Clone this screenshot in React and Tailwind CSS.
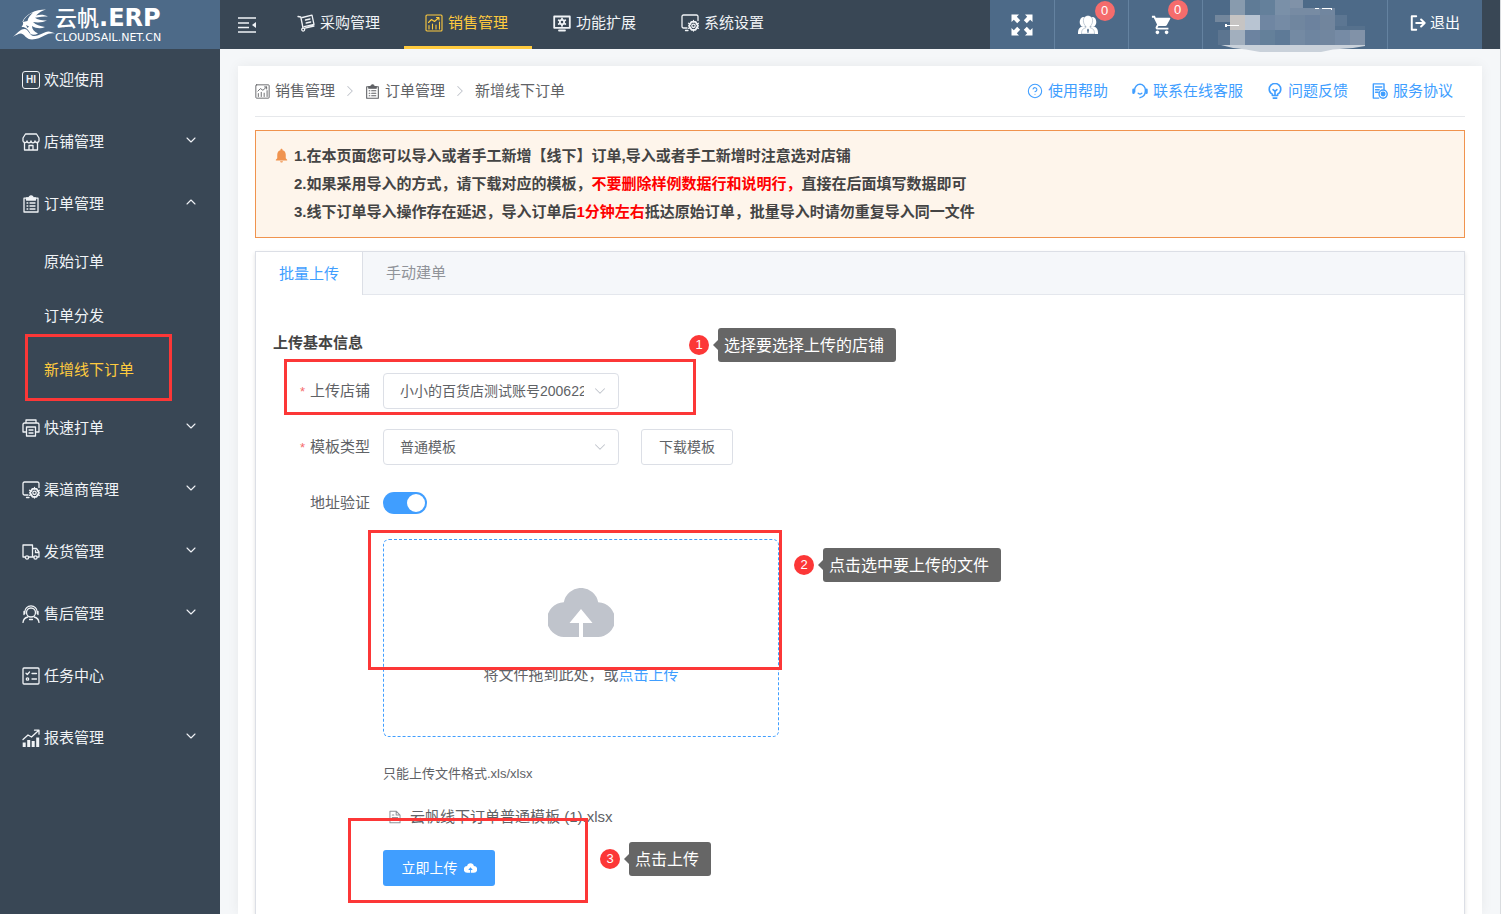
import React, { useState } from 'react';
import { ChevronDown, ChevronUp, ChevronRight, HelpCircle } from 'lucide-react';
import { MdNotifications, MdShoppingCart } from 'react-icons/md';

const Svg = ({ children, size = 'size-[18px]', sw = 1.3 }) => (
  <svg
    viewBox="0 0 18 18"
    className={`${size} shrink-0`}
    fill="none"
    stroke="currentColor"
    strokeWidth={sw}
    strokeLinecap="round"
    strokeLinejoin="round"
    aria-hidden="true"
  >
    {children}
  </svg>
);

const HiIcon = () => (
  <span className="flex size-[18px] shrink-0 items-center justify-center rounded-[3px] border border-current text-[10px] leading-none font-bold">
    HI
  </span>
);

const StoreIcon = () => (
  <Svg>
    <path d="M3.5 1h11L17 5v2.2a2 2 0 0 1-4 .6 2 2 0 0 1-4 0 2 2 0 0 1-4 0A2 2 0 0 1 1 7.2V5z" />
    <path d="M2.5 9.5V17h13V9.5M7 17v-4.5h4V17" />
  </Svg>
);

const ClipboardIcon = ({ size }) => (
  <Svg size={size}>
    <path d="M2 3.2h14V17H2z" />
    <path d="M4.5 5V3H7a2 2 0 0 1 4 0h2.5v2z" fill="currentColor" />
    <path d="M5 8h.8M5 11h.8M5 14h.8M8 8h5M8 11h5M8 14h5" />
  </Svg>
);

const PrinterIcon = () => (
  <Svg>
    <path d="M4 4V1h10v3M4.5 13H1V5.5A1.5 1.5 0 0 1 2.5 4h13A1.5 1.5 0 0 1 17 5.5V13h-3.5" />
    <path d="M4.5 8h9v9h-9zM7 11h4M7 14h4" />
  </Svg>
);

const MonitorGearIcon = () => (
  <Svg>
    <path d="M17 6.5V2.5A1.5 1.5 0 0 0 15.5 1h-13A1.5 1.5 0 0 0 1 2.5v10A1.5 1.5 0 0 0 2.5 14H6M4.5 16.5H7" />
    <path d="M10.5 7.8h4l2.5 4-2.5 4h-4l-2.5-4z" strokeWidth="1.8" />
    <circle cx="12.5" cy="11.8" r="1.7" />
    <path d="M12.5 6.5v1.3M12.5 15.8V17M7.5 9.3l1.5.8M16 13.6l1.4.7M17.4 9.3l-1.4.8M9 13.6l-1.5.7" />
  </Svg>
);

const TruckIcon = () => (
  <Svg>
    <path d="M3.5 14H1V2h9.5v12H6.5M10.5 5.5h4L17 9v5h-1.5M12 14h-1.5M17 9.5h-3.5V7.5" />
    <circle cx="5" cy="14.5" r="1.6" />
    <circle cx="13.5" cy="14.5" r="1.6" />
  </Svg>
);

const ServiceIcon = () => (
  <Svg>
    <circle cx="9" cy="7.5" r="4.5" />
    <path d="M2.8 8.5V7a6.2 6.2 0 0 1 12.4 0v1.5M2 6.5v3M16 6.5v3" />
    <path d="M1 17.5c.3-3 2-4.8 4.8-5.5M17 17.5c-.3-3-2-4.8-4.8-5.5M7.5 14.5h3" />
  </Svg>
);

const TaskIcon = () => (
  <Svg>
    <rect x="1" y="1" width="16" height="16" rx="1" />
    <path d="M4 6.2l1.3 1.3L7.5 5M10 6.5h4.5M10 12h4.5" />
    <circle cx="5.5" cy="12" r="1.2" />
  </Svg>
);

const ReportIcon = () => (
  <Svg>
    <path d="M2.2 18v-4.5M6.7 18v-7M11.2 18v-6M15.7 18V8.5" strokeWidth="3" strokeLinecap="butt" />
    <path d="M1 10.5L6 6l3.5 2L16 2M12.5 1.2H17v4" />
  </Svg>
);

const TrolleyIcon = () => (
  <Svg>
    <path d="M1 2.5l2.8.5L6 14M8 14.2l9-2.2M5.3 3.5L15 1.2l2 9.3-9.8 2.2" />
    <path d="M8.5 6l4.5-1M9.2 9l4.5-1" />
    <circle cx="6.2" cy="15.6" r="1.5" />
  </Svg>
);

const ChartIcon = ({ size }) => (
  <Svg size={size} sw={1.1}>
    <rect x="1" y="1" width="16" height="16" rx="1" />
    <path d="M4 15v-3.5M7.5 15v-5M11 15v-4M14.5 15V8" />
    <path d="M3.5 8.5l3-3 3 2L14 3.5M11.5 3.5H14V6" />
  </Svg>
);

const ExtendIcon = () => (
  <Svg sw={1.8}>
    <path d="M1.2 2.5h15.6v11.3H1.2zM6 16.5h6" />
    <circle cx="9" cy="8.1" r="2.2" />
    <path d="M9 4.3v1.2M9 10.7v1.2M5.7 6.2l1 .6M11.3 9.5l1 .6M12.3 6.2l-1 .6M6.7 9.5l-1 .6" />
  </Svg>
);

const CollapseIcon = () => (
  <Svg sw={1.4}>
    <path d="M0 2h18M0 7h11M0 11.5h11M0 16h18" strokeLinecap="butt" />
    <path d="M18 6v6l-4-3z" fill="currentColor" stroke="none" />
  </Svg>
);

const ExpandIcon = () => (
  <svg viewBox="0 0 22 22" className="size-[22px]" fill="currentColor" aria-hidden="true">
    {[0, 90, 180, 270].map((deg) => (
      <path key={deg} d="M.5.5H8L5.8 2.8 9.2 6.2l-3 3-3.4-3.4L.5 8z" transform={`rotate(${deg} 11 11)`} />
    ))}
  </svg>
);

const MembersIcon = () => (
  <svg viewBox="0 0 20 20" className="size-5" fill="currentColor" aria-hidden="true">
    <ellipse cx="5.5" cy="7" rx="3.8" ry="5" />
    <ellipse cx="14.5" cy="7" rx="3.8" ry="5" />
    <path d="M0 19c0-4 .5-6 4-7.5h12c3.5 1.5 4 3.5 4 7.5z" />
    <path
      d="M10 .5c-3 0-4.6 2.2-4.6 5 0 2.5.9 4.5 2.4 5.7v1.6c-2.8.7-4.3 2-4.3 6.2h13c0-4.2-1.5-5.5-4.3-6.2v-1.6c1.5-1.2 2.4-3.2 2.4-5.7 0-2.8-1.6-5-4.6-5z"
      stroke="#4d6a88"
      strokeWidth=".35"
    />
    <path d="M10 13.5l1 1.2-.6 3.3h-.8L9 14.7z" fill="#4d6a88" />
  </svg>
);

const ExitIcon = () => (
  <Svg size="size-4" sw={2.2}>
    <path d="M7 1.5H2v15h5" />
    <path d="M7 9h9M12.5 5l4 4-4 4" />
  </Svg>
);

const HeadsetIcon = () => (
  <Svg size="size-4" sw={1.6}>
    <path d="M3 10V7.5a6 6 0 0 1 12 0V9c0 4-2 6.5-6 7.5" />
    <path d="M1.7 7.5V11M16.3 7.5V11" strokeWidth="2.8" />
    <path d="M7 11.5c1.3 1 2.7 1 4 0" />
  </Svg>
);

const BulbIcon = () => (
  <Svg size="size-4" sw={1.8}>
    <path d="M6 12.5C3.5 11 2.5 9 2.5 7a6.5 6.5 0 0 1 13 0c0 2-1 4-3.5 5.5V14H6zM7 17h4M9 14V9M6.8 7.5L9 9.5l2.2-2" />
  </Svg>
);

const AgreementIcon = () => (
  <Svg size="size-4" sw={1.6}>
    <path d="M7.5 17h-6V1h12v6M4 4.5h7M4 7.5h4M4 10.5h3" />
    <circle cx="12.5" cy="12.5" r="4.6" />
    <circle cx="12.5" cy="12.5" r="2" fill="currentColor" />
  </Svg>
);

const FileIcon = () => (
  <Svg size="size-[14px]">
    <path d="M2.5 1.5h8l5 5v10h-13zM10.5 1.5v5h5M5.5 6.5h2M5.5 9.8h7M5.5 13h7" />
  </Svg>
);

const CloudIcon = ({ className }) => (
  <svg viewBox="0 0 66 49" className={className} fill="currentColor" aria-hidden="true">
    <path d="M17 49A17 17 0 0 1 15.8 14.2A17.5 17.5 0 0 1 50.2 14.2A17 17 0 0 1 49 49H35V35h9.5L33 21 21.5 35H31v14z" />
  </svg>
);

// winged sail mark next to the brand name
const SailMark = () => (
  <svg viewBox="0 0 42 31" className="h-[31px] w-[42px]" fill="#fff" aria-hidden="true">
    <path d="M0 27.5c4-2.5 7-7.5 11.5-7.5 4 0 5 7 9.5 7 6 0 10-4.5 14.5-4.5 2 0 4.5 1 6.5 2-4-.7-7 .2-10 1.8-4 2.2-8 4.2-13 4.2-6 0-7-5-11-6-3 0-5 2-8 3z" />
    <path d="M33 .5C22 .5 13 5 9.5 12.5c1.5 2 0 4-1 5.5 3-.5 7 1.5 9 7 2 1 5 1 7.5-.5-4-1.5-6-4.500-6-7.500 4 2.500 9 3 13 1-5-1-9-2-12-5 5 1 10 .5 14-1.500-5 .3-9-.7-12-2.700 4-1 9-1.300 13-1.300-4-2-8-2-12-1 3-3 6-5 10-6z" />
    <path d="M10 13c1.5-4 5-7.5 10-9.5-3 3-5 5.5-5.5 8.5z" fill="#4d6a88" />
    <path d="M13 16l3 1.5-1.5 1.5z" fill="#4d6a88" />
  </svg>
);

// pixel mosaic that hides the account name
const MOSAIC = [
  [15, 0, 15, 15, '#889bae'], [30, 0, 15, 15, '#5f7b96'], [45, 0, 15, 15, '#64809b'], [60, 0, 15, 15, '#7a90a8'], [75, 0, 13, 8, '#8092a8'],
  [75, 8, 30, 7, '#778ba3'], [105, 8, 15, 7, '#71869f'],
  [0, 15, 15, 7, '#73879d'], [15, 15, 15, 15, '#c6c4c3'], [30, 15, 15, 15, '#b8c4d2'], [45, 15, 15, 15, '#6f86a2'], [60, 15, 15, 15, '#758ba5'],
  [75, 15, 15, 15, '#70869f'], [90, 15, 15, 15, '#6c829e'], [105, 15, 15, 15, '#71859d'], [120, 15, 12, 12, '#5c7692'],
  [3, 30, 12, 15, '#5c7590'], [15, 30, 15, 15, '#a2afbe'], [30, 30, 15, 15, '#6c83a0'], [45, 30, 15, 15, '#64809a'], [60, 30, 15, 15, '#5e7a97'],
  [75, 30, 15, 15, '#748aa3'], [90, 30, 15, 15, '#6e85a0'], [105, 30, 15, 15, '#71869f'], [120, 30, 15, 15, '#768ba5'], [135, 30, 15, 15, '#8192a8'],
  [120, 26, 30, 4, '#56718d'],
];

const AccountMosaic = () => (
  <svg viewBox="0 0 150 52" className="relative ml-3 h-[52px] w-[150px] shrink-0 self-start" aria-hidden="true">
    {MOSAIC.map(([x, y, w, h, fill], i) => (
      <rect key={i} x={x} y={y} width={w} height={h} fill={fill} />
    ))}
    <path d="M6 45h144v1l-12 2-20 1.5-12 2.5H45l-14-2.5L18 48z" fill="#c9d1da" />
    <path d="M10 24h2v1h12v1H12v1h-2zM100 8h4v1h-4zM107 8h10v2h-1V9h-9z" fill="#fff" />
  </svg>
);

const SIDE_MENU = [
  { label: '欢迎使用', icon: HiIcon },
  { label: '店铺管理', icon: StoreIcon, arrow: true },
  { label: '订单管理', icon: ClipboardIcon, arrow: true, children: ['原始订单', '订单分发', '新增线下订单'] },
  { label: '快速打单', icon: PrinterIcon, arrow: true },
  { label: '渠道商管理', icon: MonitorGearIcon, arrow: true },
  { label: '发货管理', icon: TruckIcon, arrow: true },
  { label: '售后管理', icon: ServiceIcon, arrow: true },
  { label: '任务中心', icon: TaskIcon },
  { label: '报表管理', icon: ReportIcon, arrow: true },
];

const TOP_MENU = [
  { label: '采购管理', icon: TrolleyIcon },
  { label: '销售管理', icon: ChartIcon, active: true },
  { label: '功能扩展', icon: ExtendIcon },
  { label: '系统设置', icon: MonitorGearIcon },
];

const HELP_LINKS = [
  { label: '使用帮助', icon: () => <HelpCircle className="size-4" strokeWidth={1.6} /> },
  { label: '联系在线客服', icon: HeadsetIcon },
  { label: '问题反馈', icon: BulbIcon },
  { label: '服务协议', icon: AgreementIcon },
];

const Highlight = ({ className }) => (
  <div className={`pointer-events-none absolute z-10 border-3 border-[#fc3737] ${className}`} />
);

const Callout = ({ step, text, className }) => (
  <div className={`absolute z-10 flex items-center whitespace-nowrap ${className}`}>
    <span className="mr-1 flex size-5 items-center justify-center rounded-full bg-[#fc3737] text-[13px] text-white">{step}</span>
    <span className="border-y-5 border-r-5 border-y-transparent border-r-[#666]" />
    <span className="h-[34px] rounded-[3px] bg-[#666] pr-3 pl-[6px] text-base leading-[35px] text-white">{text}</span>
  </div>
);

const Sidebar = () => (
  <aside className="w-[220px] shrink-0 bg-[#394755] text-[#f0f3f6]">
    <a href="#home" className="flex h-[49px] items-center bg-[#4d6a88] pl-[13px] text-white">
      <SailMark />
      <span className="flex flex-col">
        <span className="flex h-6 items-baseline leading-6">
          <span className="text-[22px] font-medium">云帆</span>
          <span className="font-['DejaVu_Sans'] text-2xl leading-6 font-bold">.ERP</span>
        </span>
        <span className="mt-[2px] font-['DejaVu_Sans'] text-[11px] leading-[11px]">CLOUDSAIL.NET.CN</span>
      </span>
    </a>
    <nav>
      <ul>
        {SIDE_MENU.map((item) => (
          <li key={item.label}>
            <a href="#menu" className="flex h-[62px] items-center pr-[21px] pl-[22px]">
              <item.icon />
              <span className="ml-1 flex-1">{item.label}</span>
              {item.arrow &&
                (item.children ? (
                  <ChevronUp className="mb-1 size-4" strokeWidth={1.6} />
                ) : (
                  <ChevronDown className="mb-1 size-4" strokeWidth={1.6} />
                ))}
            </a>
            {item.children && (
              <ul>
                {item.children.map((name, i) => (
                  <li key={name} className="relative">
                    <a
                      href="#sub"
                      className={`flex h-[54px] items-center pl-11 ${i === 2 ? 'text-[#ffcb3e]' : ''}`}
                    >
                      {name}
                    </a>
                    {i === 2 && <Highlight className="-top-[9px] left-[25px] h-[67px] w-[147px]" />}
                  </li>
                ))}
              </ul>
            )}
          </li>
        ))}
      </ul>
    </nav>
  </aside>
);

const IconCell = ({ children, count, label }) => (
  <button aria-label={label} className="flex w-[74px] items-center justify-center border-l border-[#6482a0] pr-2">
    <span className="relative">
      {children}
      <span className="absolute -top-[14px] left-[17px] flex size-5 items-center justify-center rounded-full bg-[#f56c6c] text-[13px]">
        {count}
      </span>
    </span>
  </button>
);

const Header = () => (
  <header className="flex h-[49px] bg-[#394755] text-[#f0f3f6]">
    <button aria-label="收起菜单" className="px-[18px]">
      <CollapseIcon />
    </button>
    <nav className="ml-[2px] flex">
      {TOP_MENU.map((item) => (
        <a
          key={item.label}
          href="#top"
          className={`flex w-32 items-center gap-[5px] border-b-3 pl-[21px] ${
            item.active ? 'border-[#ffcb3e] text-[#ffcb3e]' : 'border-transparent'
          }`}
        >
          <item.icon />
          {item.label}
        </a>
      ))}
    </nav>
    <div className="mr-[18px] ml-auto flex bg-[#4d6a88] text-white">
      <button aria-label="全屏" className="flex w-16 items-center justify-center">
        <ExpandIcon />
      </button>
      <IconCell count={0} label="会员">
        <MembersIcon />
      </IconCell>
      <IconCell count={0} label="购物车">
        <MdShoppingCart className="size-[22px]" />
      </IconCell>
      <div className="flex w-[185px] border-l border-[#6482a0]">
        <AccountMosaic />
      </div>
      <button className="flex w-[95px] items-center justify-center gap-1 border-l border-[#6482a0] pb-1">
        <ExitIcon />
        退出
      </button>
    </div>
  </header>
);

const Required = () => <span className="mr-[5px] text-[13px] text-[#f56c6c]">*</span>;

const SelectBox = ({ id, children }) => (
  <div className="relative w-[236px]">
    <select
      id={id}
      className="h-9 w-full appearance-none rounded-sm border border-[#dcdfe6] bg-white pr-[34px] pl-4 text-sm text-[#606266]"
    >
      {children}
    </select>
    <ChevronDown
      className="pointer-events-none absolute top-[9px] right-[10px] size-[18px] text-[#c0c4cc]"
      strokeWidth={1.4}
    />
  </div>
);

const App = () => {
  const [tab, setTab] = useState('批量上传');
  const [verify, setVerify] = useState(true);

  return (
    <div className="flex min-h-screen border-r border-[#d9dcdf] bg-[#f5f7f9] font-['Liberation_Sans','Noto_Sans_CJK_SC',sans-serif] text-[15px] leading-6 text-[#606266]">
      <Sidebar />
      <div className="flex min-w-0 flex-1 flex-col">
        <Header />
        <main className="mx-[18px] mt-[17px] flex flex-1 flex-col bg-white px-[17px] shadow-[0_0_12px_rgba(0,0,0,0.06)]">
          <div className="flex h-[51px] items-center justify-between border-b border-[#e6e8eb] pr-3">
            <nav className="flex items-center">
              <ChartIcon size="size-[15px]" />
              <a href="#sales" className="ml-[5px]">销售管理</a>
              <ChevronRight className="mx-[6px] size-[18px] text-[#c0c4cc]" strokeWidth={1.4} />
              <ClipboardIcon size="size-[15px]" />
              <a href="#orders" className="ml-[5px]">订单管理</a>
              <ChevronRight className="mx-[6px] size-[18px] text-[#c0c4cc]" strokeWidth={1.4} />
              <span>新增线下订单</span>
            </nav>
            <div className="flex gap-6 text-[#409eff]">
              {HELP_LINKS.map((link) => (
                <a key={link.label} href="#help" className="flex items-center gap-[5px]">
                  <link.icon />
                  {link.label}
                </a>
              ))}
            </div>
          </div>

          <div className="mt-[13px] flex border border-[#f0934e] bg-[#fef5eb] pt-[11px] pb-[11px] pl-[17px] leading-7 font-bold text-[#444]">
            <MdNotifications className="mt-[5px] mr-1 size-[17px] text-[#f0934e]" />
            <div>
              <p>1.在本页面您可以导入或者手工新增【线下】订单,导入或者手工新增时注意选对店铺</p>
              <p>
                2.如果采用导入的方式，请下载对应的模板，
                <span className="text-[#f00]">不要删除样例数据行和说明行，</span>
                直接在后面填写数据即可
              </p>
              <p>
                3.线下订单导入操作存在延迟，导入订单后<span className="text-[#f00]">1分钟左右</span>
                抵达原始订单，批量导入时请勿重复导入同一文件
              </p>
            </div>
          </div>

          <section className="mt-[13px] flex-1 border border-b-0 border-[#dcdfe6] shadow-[0_2px_4px_rgba(0,0,0,0.12)]">
            <div className="flex h-[43px] bg-[#f5f7fa]" role="tablist">
              {['批量上传', '手动建单'].map((name) => (
                <button
                  key={name}
                  role="tab"
                  aria-selected={tab === name}
                  onClick={() => setTab(name)}
                  className={`px-[23px] ${
                    tab === name
                      ? 'border-r border-[#dcdfe6] bg-white text-[#409eff]'
                      : 'border-b border-b-[#e4e7ed] text-[#909399]'
                  }`}
                >
                  {name}
                </button>
              ))}
              <span className="flex-1 border-b border-[#e4e7ed]" />
            </div>

            <form className="px-[17px] pt-9 pb-6" onSubmit={(e) => e.preventDefault()}>
              <h2 className="mb-[18px] font-bold text-[#444]">上传基本信息</h2>

              <div className="grid gap-5">
                <div className="relative flex items-center">
                  <label htmlFor="shop" className="w-[110px] pr-[13px] text-right">
                    <Required />
                    上传店铺
                  </label>
                  <SelectBox id="shop">
                    <option>小小的百货店测试账号200622</option>
                  </SelectBox>
                  <Highlight className="-top-[14px] left-[11px] h-14 w-[412px]" />
                  <Callout step={1} text="选择要选择上传的店铺" className="-top-[45px] left-[416px]" />
                </div>

                <div className="flex items-center">
                  <label htmlFor="template" className="w-[110px] pr-[13px] text-right">
                    <Required />
                    模板类型
                  </label>
                  <SelectBox id="template">
                    <option>普通模板</option>
                    <option>自定义模板</option>
                  </SelectBox>
                  <button type="button" className="ml-[22px] h-9 rounded-[3px] border border-[#dcdfe6] px-[17px] text-sm">
                    下载模板
                  </button>
                </div>

                <div className="flex h-9 items-center">
                  <label htmlFor="verify" className="w-[110px] pr-[13px] text-right">
                    地址验证
                  </label>
                  <input
                    id="verify"
                    type="checkbox"
                    checked={verify}
                    onChange={(e) => setVerify(e.target.checked)}
                    className="flex h-[22px] w-11 appearance-none items-center rounded-full bg-[#dcdfe6] px-[2px] before:size-[18px] before:rounded-full before:bg-white checked:justify-end checked:bg-[#409eff]"
                  />
                </div>
              </div>

              <div className="mt-[18px] ml-[110px]">
                <div className="relative w-[396px]">
                  <label className="flex h-[198px] cursor-pointer flex-col items-center rounded-md border border-dashed border-[#409eff] pt-12">
                    <CloudIcon className="h-[49px] w-[66px] text-[#c0c4cc]" />
                    <span className="mt-[26px]">
                      将文件拖到此处，或<span className="text-[#409eff]">点击上传</span>
                    </span>
                    <input type="file" accept=".xls,.xlsx" className="sr-only" />
                  </label>
                  <Highlight className="-top-[9px] -left-[15px] h-[140px] w-[414px]" />
                  <Callout step={2} text="点击选中要上传的文件" className="top-[9px] left-[411px]" />
                </div>
                <p className="mt-[25px] text-[13px]">只能上传文件格式.xls/xlsx</p>
                <p className="mt-[19px] flex items-center gap-2 pl-[5px]">
                  <span className="text-[#909399]">
                    <FileIcon />
                  </span>
                  云帆线下订单普通模板 (1).xlsx
                </p>
                <div className="relative mt-[21px]">
                  <button
                    type="submit"
                    className="flex h-9 w-28 items-center justify-center gap-[6px] rounded-[3px] bg-[#409eff] text-sm text-white"
                  >
                    立即上传
                    <CloudIcon className="h-[10px] w-[13px]" />
                  </button>
                  <Highlight className="-top-8 -left-[35px] h-[85px] w-60" />
                  <Callout step={3} text="点击上传" className="-top-2 left-[217px]" />
                </div>
              </div>
            </form>
          </section>
        </main>
      </div>
    </div>
  );
};

export default App;
